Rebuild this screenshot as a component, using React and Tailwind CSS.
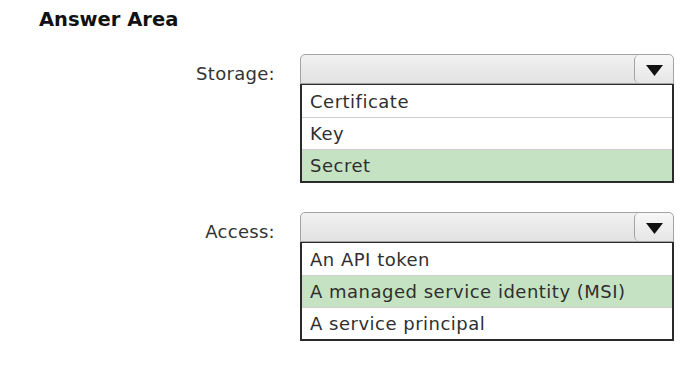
import React from "react";

const font = { fontFamily: '"DejaVu Sans", Verdana, sans-serif' };

function Dropdown({ options, selected }) {
  return (
    <div className="w-[374px]">
      <div className="relative h-[30px] rounded-t-[5px] border border-[#a3a3a3] bg-gradient-to-b from-[#f1f1f1] to-[#e2e2e2] flex justify-end">
        <div className="w-[39px] h-full rounded-[5px] border-l border-[#a3a3a3] bg-gradient-to-b from-[#f7f7f7] to-[#e6e6e6] flex items-center justify-center pt-[3px]">
          <svg width="17" height="11" viewBox="0 0 17 11">
            <polygon points="0,0 17,0 8.5,11" fill="#111" />
          </svg>
        </div>
      </div>
      <div className="border-2 border-t border-[#2a2a2a] bg-white">
        {options.map((o, i) => (
          <div
            key={o}
            className={
              "h-[32px] flex items-center pl-[8px] text-[18px] tracking-[0.5px] text-[#2f2f2f] " +
              (i > 0 ? "border-t border-[#cfcfcf] " : "") +
              (o === selected ? "bg-[#c5e2c3] text-[#2b382b]" : "")
            }
          >
            {o}
          </div>
        ))}
      </div>
    </div>
  );
}

function Row({ label, options, selected }) {
  return (
    <div className="flex items-start">
      <div className="w-[276px] pr-[2px] h-[30px] flex items-center justify-end pt-[8px] text-[18px] tracking-[0.3px] text-[#333]">
        {label}
      </div>
      <div className="ml-[23px]">
        <Dropdown options={options} selected={selected} />
      </div>
    </div>
  );
}

export default function App() {
  return (
    <div className="w-[693px] h-[368px] bg-white overflow-hidden" style={font}>
      <div className="pt-[7px] pl-[39px] text-[19.5px] font-bold text-[#111] leading-[26px]">
        Answer Area
      </div>
      <div className="mt-[21px] flex flex-col gap-[29px] pl-[1px]">
        <Row label="Storage:" options={["Certificate", "Key", "Secret"]} selected="Secret" />
        <Row
          label="Access:"
          options={["An API token", "A managed service identity (MSI)", "A service principal"]}
          selected="A managed service identity (MSI)"
        />
      </div>
    </div>
  );
}
